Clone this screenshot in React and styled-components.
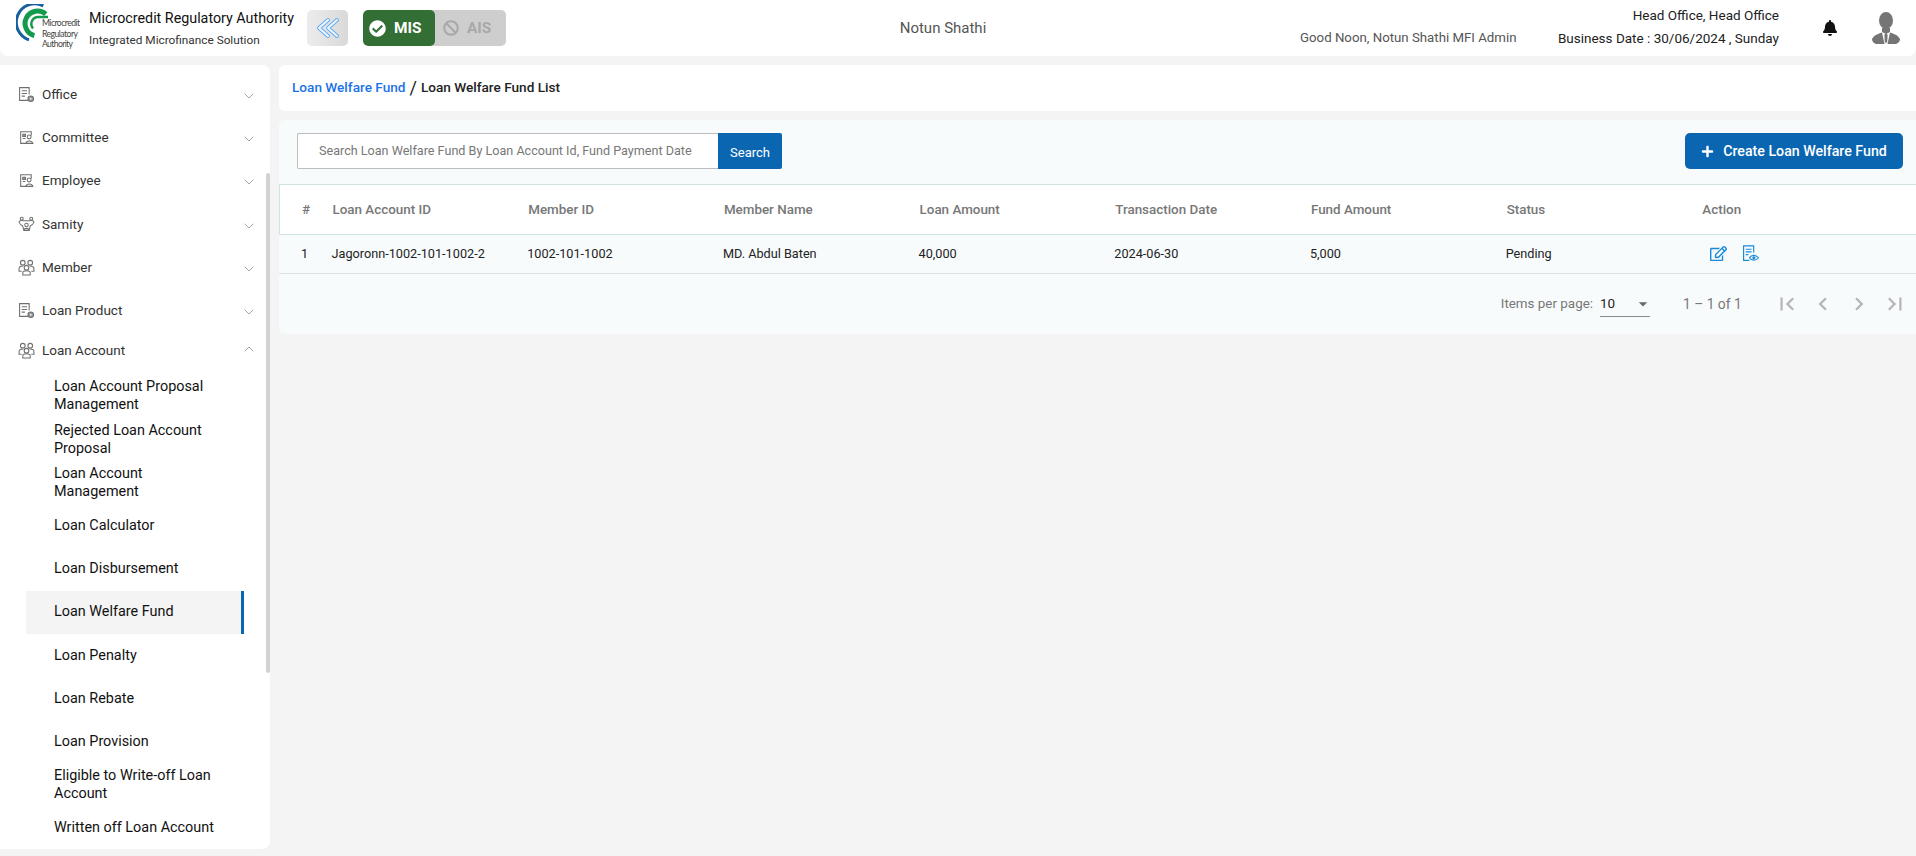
import React from 'react';
import styled, { createGlobalStyle } from 'styled-components';
import { ChevronDown, ChevronUp } from 'lucide-react';
import { FaCheckCircle, FaBan, FaBell, FaRegEdit, FaPlus } from 'react-icons/fa';
import { MdFirstPage, MdLastPage, MdChevronLeft, MdChevronRight, MdArrowDropDown } from 'react-icons/md';

const GlobalStyle = createGlobalStyle`
  html, body {
    margin: 0;
    height: 100%;
    overflow: hidden;
    background: #f4f4f4;
    font-family: Roboto, "Liberation Sans", sans-serif;
  }
  * { box-sizing: border-box; }
`;

const Page = styled.div`
  width: 1916px;
  height: 856px;
  display: flex;
  flex-direction: column;
  gap: 9px;
`;

const Header = styled.header`
  height: 56px;
  background: #fff;
  border-radius: 0 0 8px 8px;
  display: flex;
  align-items: center;
  padding-left: 16px;
`;

const LogoBox = styled.div`
  width: 64px;
  height: 48px;
  flex: none;
  margin-right: 9px;
`;

const Brand = styled.div`
  width: 218px;
  flex: none;
  white-space: nowrap;
`;

const BrandTitle = styled.div`
  font-size: 14.3px;
  line-height: 20px;
  color: #111;
  margin-bottom: 4px;
`;

const BrandSub = styled.div`
  font-size: 11.8px;
  line-height: 16px;
  color: #333;
`;

const CollapseButton = styled.button`
  width: 41px;
  height: 36px;
  flex: none;
  border: 0;
  padding: 0;
  border-radius: 5px;
  background: linear-gradient(90deg, #ececec, #d9d9d9);
  display: flex;
  align-items: center;
  justify-content: center;
  margin-right: 15px;
`;

const Toggle = styled.div`
  display: flex;
  width: 143px;
  height: 36px;
  flex: none;
  border-radius: 5px;
  background: #cecece;
  overflow: hidden;
`;

const ToggleItem = styled.div`
  width: ${p => (p.$active ? '72px' : '71px')};
  display: flex;
  align-items: center;
  padding-left: ${p => (p.$active ? '6px' : '8px')};
  gap: 8px;
  font-size: 15.4px;
  font-weight: 700;
  background: ${p => (p.$active ? '#336e35' : 'transparent')};
  color: ${p => (p.$active ? '#fff' : '#a8a8a8')};
  border-radius: 5px;
`;

const OrgName = styled.div`
  flex: 0 0 794px;
  padding-left: 80px;
  text-align: center;
  font-size: 15px;
  color: #555;
`;

const Greeting = styled.div`
  width: 217px;
  flex: none;
  align-self: flex-end;
  margin-bottom: 10px;
  white-space: nowrap;
  font-size: 13.25px;
  line-height: 16px;
  color: #555;
`;

const OfficeInfo = styled.div`
  margin-left: 41px;
  width: 221px;
  height: 56px;
  flex: none;
  display: flex;
  flex-direction: column;
  justify-content: space-between;
  align-items: flex-end;
  padding: 7px 0 10px;
  font-size: 13.5px;
  line-height: 16px;
  color: #222;
  white-space: nowrap;
`;

const BellWrap = styled.div`
  margin-left: 43px;
  width: 16px;
  display: flex;
  color: #111;
  font-size: 16px;
`;

const AvatarWrap = styled.div`
  margin-left: 33px;
  width: 30px;
  height: 32px;
  display: flex;
`;

const Body = styled.div`
  flex: 1;
  min-height: 0;
  display: flex;
  gap: 9px;
  padding-bottom: 7px;
`;

const Sidebar = styled.aside`
  position: relative;
  width: 270px;
  flex: none;
  background: #fff;
  border-radius: 0 8px 8px 0;
  overflow: hidden;
  padding-top: 8px;
`;

const ScrollThumb = styled.div`
  position: absolute;
  right: 0;
  top: 108px;
  width: 4px;
  height: 500px;
  border-radius: 2px;
  background: #d2d2d2;
`;

const NavRow = styled.div`
  height: 43.2px;
  display: flex;
  align-items: center;
  padding: 0 13px 0 18px;
  padding-bottom: ${p => (p.$open ? '6px' : '0')};
  font-size: 13.5px;
  color: #333;
`;

const NavIcon = styled.span`
  width: 24px;
  height: 17px;
  flex: none;
  display: flex;
`;

const NavLabel = styled.span`
  flex: 1;
  margin-top: -1px;
`;

const NavChevron = styled.span`
  display: flex;
  color: #777;
  margin-top: ${p => (p.$open ? '-3px' : '3px')};
`;

const SubItem = styled.div`
  width: 218px;
  height: 43.2px;
  margin-left: 26px;
  padding: 0 20px 1px 28px;
  display: flex;
  align-items: center;
  font-size: 14.4px;
  line-height: 18px;
  color: #111;
  background: ${p => (p.$active ? '#f4f4f4' : 'transparent')};
  border-right: 3px solid ${p => (p.$active ? '#0b66b2' : 'transparent')};
`;

const Main = styled.main`
  flex: 1;
  min-width: 0;
  display: flex;
  flex-direction: column;
  gap: 9px;
`;

const Breadcrumb = styled.div`
  height: 46px;
  background: #fff;
  border-radius: 6px 0 0 6px;
  display: flex;
  align-items: center;
  padding: 0 0 2px 13px;
  font-size: 13.6px;
  font-weight: 500;
  color: #222;
`;

const CrumbLink = styled.span`
  color: #1a73e8;
`;

const CrumbSep = styled.span`
  margin: 0 4px;
  font-size: 18px;
  font-weight: 400;
`;

const Card = styled.section`
  height: 214px;
  background: #f8fbfc;
  border-radius: 6px 0 0 6px;
`;

const Toolbar = styled.div`
  height: 64px;
  display: flex;
  justify-content: space-between;
  align-items: flex-start;
  padding: 13px 13px 0 18px;
`;

const SearchForm = styled.div`
  display: flex;
  height: 36px;
`;

const SearchInput = styled.input`
  width: 421px;
  height: 36px;
  border: 1px solid #bdbdbd;
  border-right: 0;
  border-radius: 2px 0 0 2px;
  background: #fff;
  padding: 0 0 1px 21px;
  font: 12.6px Roboto, sans-serif;
  outline: none;
  &::placeholder { color: #777; opacity: 1; }
`;

const SearchButton = styled.button`
  width: 64px;
  border: 0;
  padding: 2px 0 0;
  background: #0b66b2;
  color: #fff;
  font: 13px Roboto, sans-serif;
  border-radius: 0 2px 2px 0;
`;

const CreateButton = styled.button`
  width: 218px;
  height: 36px;
  border: 0;
  border-radius: 5px;
  background: #0b66b2;
  color: #fff;
  font: 500 14.2px Roboto, sans-serif;
  display: flex;
  align-items: center;
  justify-content: center;
  gap: 9px;
`;

const gridColumns = '52.5px repeat(7, 195.7px) 1fr';

const HeadRow = styled.div`
  display: grid;
  grid-template-columns: ${gridColumns};
  align-items: center;
  height: 51px;
  padding-bottom: 1px;
  background: #fff;
  border: 1px solid #cfe3e3;
  border-right: 0;
  font-size: 13.4px;
  font-weight: 500;
  color: #777;
`;

const DataRow = styled.div`
  display: grid;
  grid-template-columns: ${gridColumns};
  align-items: center;
  height: 39px;
  padding-bottom: 1px;
  border-bottom: 1px solid #dfe3e5;
  font-size: 12.7px;
  color: #222;
`;

const IndexCell = styled.div`
  padding-left: 22px;
`;

const ActionCell = styled.div`
  display: flex;
  align-items: center;
  gap: 15px;
  padding-left: 9px;
  color: #1a8ad8;
  font-size: 16px;
`;

const Pager = styled.div`
  height: 59px;
  display: flex;
  align-items: center;
  justify-content: flex-end;
  padding-right: 3px;
  font-size: 13.4px;
  color: #777;
`;

const PageSelect = styled.div`
  width: 50px;
  height: 26px;
  margin: 0 33px 0 7px;
  padding-top: 1px;
  border-bottom: 1px solid #8a8a8a;
  display: flex;
  align-items: center;
  justify-content: space-between;
  color: #222;
  font-size: 13.4px;
  svg { margin-right: -3px; }
`;

const PageRange = styled.span`
  width: 86px;
  font-size: 13.8px;
`;

const PageButton = styled.span`
  width: 36px;
  display: flex;
  justify-content: center;
  color: #b4b4b4;
  font-size: 26px;
`;

const navItems = [
  { label: 'Office', icon: 'doc' },
  { label: 'Committee', icon: 'board' },
  { label: 'Employee', icon: 'board' },
  { label: 'Samity', icon: 'samity' },
  { label: 'Member', icon: 'group' },
  { label: 'Loan Product', icon: 'doc' },
];

const subItems = [
  'Loan Account Proposal Management',
  'Rejected Loan Account Proposal',
  'Loan Account Management',
  'Loan Calculator',
  'Loan Disbursement',
  'Loan Welfare Fund',
  'Loan Penalty',
  'Loan Rebate',
  'Loan Provision',
  'Eligible to Write-off Loan Account',
  'Written off Loan Account',
];

const columns = ['Loan Account ID', 'Member ID', 'Member Name', 'Loan Amount', 'Transaction Date', 'Fund Amount', 'Status', 'Action'];
const row = ['Jagoronn-1002-101-1002-2', '1002-101-1002', 'MD. Abdul Baten', '40,000', '2024-06-30', '5,000', 'Pending'];

function Logo() {
  return (
    <svg width="64" height="48" viewBox="0 0 64 48">
      <path d="M27.3 1.9 A18.5 18.5 0 1 0 13 35.9" fill="none" stroke="#17609e" strokeWidth="3" />
      <path d="M29.8 10.1 A12.5 12.5 0 1 0 18.4 31.6" fill="none" stroke="#149a4c" strokeWidth="5" />
      <path d="M32 13 H21.5 A7 7 0 0 0 17 24.5" fill="none" stroke="#149a4c" strokeWidth="2.5" />
      <g fontFamily="Lato, sans-serif" fontSize="8.6" fill="#444">
        <text x="26" y="22" textLength="38">Microcredit</text>
        <text x="26" y="32.5" textLength="36">Regulatory</text>
        <text x="26" y="43" textLength="31">Authority</text>
      </g>
    </svg>
  );
}

function DoubleChevron() {
  const a = 'M12 3 L3 11 L12 19';
  const b = 'M21 3 L12 11 L21 19';
  return (
    <svg width="24" height="22" viewBox="0 0 24 22" fill="none" strokeLinecap="round" strokeLinejoin="round">
      <path d={a} stroke="#62aef0" strokeWidth="4" />
      <path d={a} stroke="#eef5fc" strokeWidth="2" />
      <path d={b} stroke="#62aef0" strokeWidth="4" />
      <path d={b} stroke="#eef5fc" strokeWidth="2" />
    </svg>
  );
}

function Avatar() {
  return (
    <svg width="30" height="32" viewBox="0 0 30 32" fill="#757575">
      <ellipse cx="15" cy="8.5" rx="7" ry="8.5" />
      <path d="M11 16 h8 v4 l-4 2 l-4 -2z" />
      <path d="M1 27 C3 23 7 22 11 20.5 L13.5 32 H6 C4 32 1 30 1 27z" />
      <path d="M29 27 C27 23 23 22 19 20.5 L16.5 32 H24 C26 32 29 30 29 27z" />
      <path d="M14 21.5 h2 l.6 2 l-.4 6 l-1.2 2 l-1.2 -2 l-.4 -6z" />
    </svg>
  );
}

function SideIcon({ type }) {
  const stroke = { fill: 'none', stroke: '#707070', strokeWidth: 1 };
  if (type === 'doc') {
    return (
      <svg width="17" height="17" viewBox="0 0 16 16" {...stroke}>
        <path d="M10.5 13.5 H1.5 V1.5 H10.5 V8" />
        <path d="M3.5 4.5 H8.5 M3.5 7 H8.5 M3.5 9.5 H6.5" />
        <circle cx="12" cy="12" r="2.6" fill="#999" />
        <circle cx="12" cy="12" r="0.8" fill="#fff" stroke="none" />
      </svg>
    );
  }
  if (type === 'board') {
    return (
      <svg width="17" height="17" viewBox="0 0 16 16" {...stroke}>
        <path d="M8 13.5 H2.5 V2.5 H12.5 V6" />
        <path d="M4.5 5 H7 V7 H4.5z M4.5 9 H7" fill="#999" />
        <circle cx="10.5" cy="7.5" r="1.8" />
        <path d="M7.5 13.5 C8 10.5 13 10.5 14 13.5z" />
      </svg>
    );
  }
  if (type === 'samity') {
    return (
      <svg width="17" height="17" viewBox="0 0 16 16" {...stroke}>
        <circle cx="3.5" cy="2.5" r="1.4" />
        <circle cx="12.5" cy="2.5" r="1.4" />
        <path d="M1 6 C1 4.5 3 4 5 4.5 H11 C13 4 15 4.5 15 6 C14 8 12.5 9 11.5 9.5 L10.5 13.5 H5.5 L4.5 9.5 C3.5 9 2 8 1 6z" />
        <circle cx="8" cy="8.5" r="1.6" />
        <path d="M5.5 13.5 C6 11 10 11 10.5 13.5" />
      </svg>
    );
  }
  return (
    <svg width="17" height="17" viewBox="0 0 16 16" {...stroke}>
      <circle cx="4.5" cy="3.5" r="2.2" />
      <circle cx="11.5" cy="3.5" r="2.2" />
      <circle cx="8" cy="8.2" r="2.2" />
      <path d="M3.5 11.5 H1 V9 C1 7.2 2.5 6.5 5 6.5" />
      <path d="M12.5 11.5 H15 V9 C15 7.2 13.5 6.5 11 6.5" />
      <path d="M4.5 15 V13 C4.5 11.5 6 11 8 11 C10 11 11.5 11.5 11.5 13 V15z" />
    </svg>
  );
}

function ViewDocIcon() {
  return (
    <svg width="17" height="17" viewBox="0 0 16 16" fill="none" stroke="#1a8ad8" strokeWidth="1.1">
      <path d="M7 14.5 H1.5 V.8 H11 V7" />
      <path d="M3.5 4 H9 M3.5 6.5 H9 M3.5 9 H6" />
      <path d="M7 12 C9 9 13 9 15.5 12 C13 15 9 15 7 12z" fill="#fff" />
      <circle cx="11.2" cy="12" r="1.5" fill="#1a8ad8" stroke="none" />
    </svg>
  );
}

export default function App() {
  return (
    <>
      <GlobalStyle />
      <Page>
        <Header>
          <LogoBox>
            <Logo />
          </LogoBox>
          <Brand>
            <BrandTitle>Microcredit Regulatory Authority</BrandTitle>
            <BrandSub>Integrated Microfinance Solution</BrandSub>
          </Brand>
          <CollapseButton>
            <DoubleChevron />
          </CollapseButton>
          <Toggle>
            <ToggleItem $active>
              <FaCheckCircle size={17} />
              MIS
            </ToggleItem>
            <ToggleItem>
              <FaBan size={16} />
              AIS
            </ToggleItem>
          </Toggle>
          <OrgName>Notun Shathi</OrgName>
          <Greeting>Good Noon, Notun Shathi MFI Admin</Greeting>
          <OfficeInfo>
            <span>Head Office, Head Office</span>
            <span>Business Date : 30/06/2024 , Sunday</span>
          </OfficeInfo>
          <BellWrap>
            <FaBell />
          </BellWrap>
          <AvatarWrap>
            <Avatar />
          </AvatarWrap>
        </Header>
        <Body>
          <Sidebar>
            {navItems.map(item => (
              <NavRow key={item.label}>
                <NavIcon>
                  <SideIcon type={item.icon} />
                </NavIcon>
                <NavLabel>{item.label}</NavLabel>
                <NavChevron>
                  <ChevronDown size={16} strokeWidth={1} />
                </NavChevron>
              </NavRow>
            ))}
            <NavRow $open>
              <NavIcon>
                <SideIcon type="group" />
              </NavIcon>
              <NavLabel>Loan Account</NavLabel>
              <NavChevron $open>
                <ChevronUp size={16} strokeWidth={1} />
              </NavChevron>
            </NavRow>
            {subItems.map(label => (
              <SubItem key={label} $active={label === 'Loan Welfare Fund'}>
                {label}
              </SubItem>
            ))}
            <ScrollThumb />
          </Sidebar>
          <Main>
            <Breadcrumb>
              <CrumbLink>Loan Welfare Fund</CrumbLink>
              <CrumbSep>/</CrumbSep>
              Loan Welfare Fund List
            </Breadcrumb>
            <Card>
              <Toolbar>
                <SearchForm>
                  <SearchInput placeholder="Search Loan Welfare Fund By Loan Account Id, Fund Payment Date" />
                  <SearchButton>Search</SearchButton>
                </SearchForm>
                <CreateButton>
                  <FaPlus size={13} />
                  Create Loan Welfare Fund
                </CreateButton>
              </Toolbar>
              <HeadRow>
                <IndexCell>#</IndexCell>
                {columns.map(c => (
                  <div key={c}>{c}</div>
                ))}
              </HeadRow>
              <DataRow>
                <IndexCell>1</IndexCell>
                {row.map(c => (
                  <div key={c}>{c}</div>
                ))}
                <ActionCell>
                  <FaRegEdit size={17} />
                  <ViewDocIcon />
                </ActionCell>
              </DataRow>
              <Pager>
                Items per page:
                <PageSelect>
                  10
                  <MdArrowDropDown size={20} color="#666" />
                </PageSelect>
                <PageRange>1 – 1 of 1</PageRange>
                <PageButton><MdFirstPage /></PageButton>
                <PageButton><MdChevronLeft /></PageButton>
                <PageButton><MdChevronRight /></PageButton>
                <PageButton><MdLastPage /></PageButton>
              </Pager>
            </Card>
          </Main>
        </Body>
      </Page>
    </>
  );
}
